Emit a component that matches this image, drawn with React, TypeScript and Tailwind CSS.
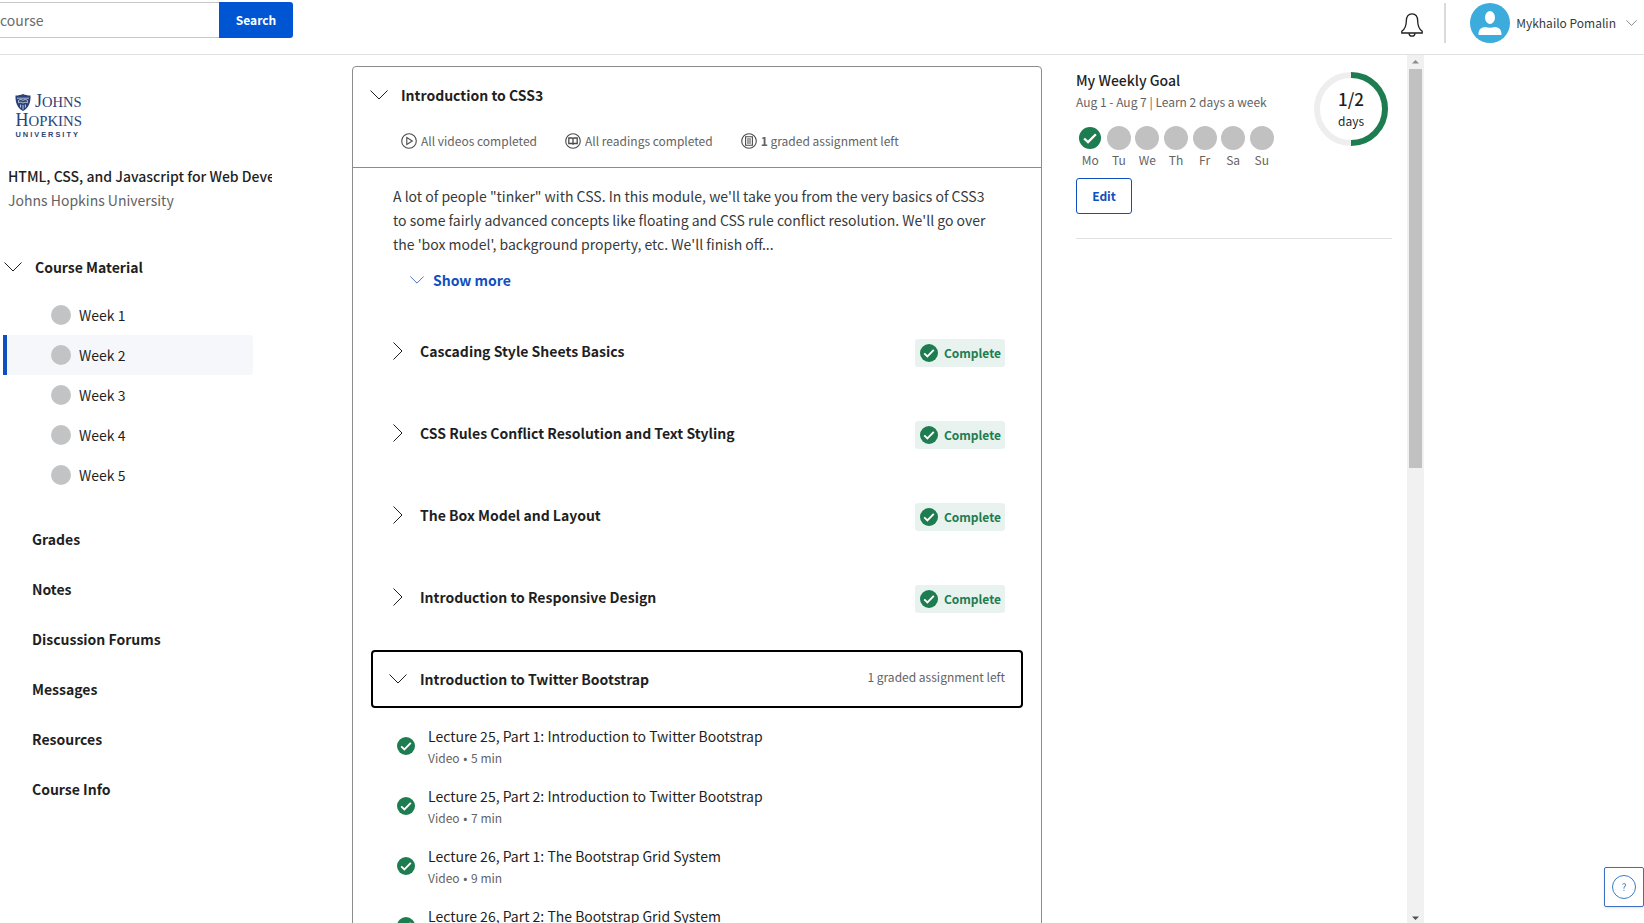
import React from "react";

const weeks = ["Week 1", "Week 2", "Week 3", "Week 4", "Week 5"];
const links = ["Grades", "Notes", "Discussion Forums", "Messages", "Resources", "Course Info"];
const lessons = [
  "Cascading Style Sheets Basics",
  "CSS Rules Conflict Resolution and Text Styling",
  "The Box Model and Layout",
  "Introduction to Responsive Design",
];
const lectures = [
  { title: "Lecture 25, Part 1: Introduction to Twitter Bootstrap", length: "5 min" },
  { title: "Lecture 25, Part 2: Introduction to Twitter Bootstrap", length: "7 min" },
  { title: "Lecture 26, Part 1: The Bootstrap Grid System", length: "9 min" },
  { title: "Lecture 26, Part 2: The Bootstrap Grid System", length: "8 min" },
];
const days = ["Mo", "Tu", "We", "Th", "Fr", "Sa", "Su"];

function ChevronDown({ className }: { className: string }) {
  return (
    <svg viewBox="0 0 18 10" className={className} fill="none" stroke="currentColor" strokeWidth="1" aria-hidden="true">
      <path d="M0.5 0.5 9 9 17.5 0.5" />
    </svg>
  );
}

function ChevronRight() {
  return (
    <svg viewBox="0 0 10 18" className="h-[18px] w-[10px]" fill="none" stroke="currentColor" strokeWidth="1" aria-hidden="true">
      <path d="M0.5 0.5 9 9 0.5 17.5" />
    </svg>
  );
}

function Check({ className }: { className: string }) {
  return (
    <svg viewBox="0 0 18 18" className={className} aria-hidden="true">
      <circle cx="9" cy="9" r="9" fill="#1d7c50" />
      <path d="M4.2 9.4 7.4 12.4 13.8 5.9" fill="none" stroke="#fff" strokeWidth="1.9" />
    </svg>
  );
}

function Logo() {
  return (
    <svg viewBox="0 0 72 48" className="h-12 w-[72px] overflow-visible" role="img" aria-label="Johns Hopkins University" fill="#2b4278">
      <path d="M0.500 1.500C3 1.600 5.500 1 8 0c2.500 1 5 1.600 7.500 1.500C15.800 8 14 14 8 17 2 14 0.200 8 0.500 1.500Z" />
      <path d="M2 4.200h12M3.600 6.200c1.600-.9 3-.9 4.400.2 1.400-1.100 2.800-1.100 4.400-.2v2.600c-1.600-.8-3-.7-4.400.3-1.400-1-2.800-1.100-4.400-.3Z" fill="none" stroke="#c3cce0" strokeWidth="0.9" />
      <path d="M5.600 10.500v3M8 11v4.500M10.400 10.500v3" stroke="#c3cce0" strokeWidth="1" />
      <g fontFamily="Liberation Serif, serif">
        <text x="20" y="13" fontSize="18">J<tspan fontSize="14.500">OHNS</tspan></text>
        <text x="0.500" y="32" fontSize="18">H<tspan fontSize="14.800">OPKINS</tspan></text>
      </g>
      <text x="0.500" y="43" fontSize="7.400" className="tracking-[2px]" fontFamily="Liberation Sans, sans-serif" fontWeight="700">UNIVERSITY</text>
    </svg>
  );
}

function Header() {
  return (
    <header className="flex h-[55px] shrink-0 items-start justify-between border-b border-[#e1e1e1]">
      <form className="flex pt-[2px]" onSubmit={(e) => e.preventDefault()}>
        <input
          type="text"
          aria-label="Search course"
          placeholder="course"
          className="h-9 w-[219px] border-y border-[#c7c7c7] pb-px text-[14px] leading-5 outline-none placeholder:text-[#6b6b6b]"
        />
        <button type="submit" className="h-9 w-[74px] rounded-r-[3px] bg-[#0056d2] text-[12px] leading-5 font-bold text-white">
          Search
        </button>
      </form>
      <div className="flex items-center pt-[3px] pr-[7px]">
        <button type="button" aria-label="Notifications" className="mt-[3px] mr-[21px] text-[#1f1f1f]">
          <svg viewBox="0 0 22 24" className="h-6 w-[22px]" fill="none" stroke="currentColor" strokeWidth="1.300">
            <path d="M5.300 8C5.300 3.300 7.600 0.800 11 0.800S16.700 3.300 16.700 8c0 5.500 1.200 8 4.500 10.300V20H0.800v-1.700C4.100 16 5.300 13.500 5.300 8Z" />
            <path d="M8 20.200c.2 4 5.800 4 6 0" />
          </svg>
        </button>
        <div className="h-10 w-[2px] bg-[#dadada]" />
        <button type="button" className="ml-6 flex items-center text-[#373a3c]">
          <svg viewBox="0 0 40 40" className="size-10" aria-hidden="true">
            <circle cx="20" cy="20" r="20" fill="#3cacdc" />
            <ellipse cx="20" cy="14.500" rx="5" ry="6.500" fill="#fff" />
            <path d="M8.500 32c0-5 1.500-7.500 7-8 2.500 1 6.500 1 9 0 5.500.5 7 3 7 8Z" fill="#fff" />
          </svg>
          <span className="ml-[6px] text-[12px] leading-5">Mykhailo Pomalin</span>
          <ChevronDown className="ml-[10px] h-[6px] w-[11px]" />
        </button>
      </div>
    </header>
  );
}

function Sidebar() {
  return (
    <aside className="w-[352px] shrink-0">
      <div className="w-[272px] pt-[39px] pl-2">
        <div className="pl-[7px]">
          <Logo />
        </div>
        <h1 className="mt-[22px] overflow-hidden text-[14px] leading-6 font-medium whitespace-nowrap">
          HTML, CSS, and Javascript for Web Developers
        </h1>
        <p className="text-[14px] leading-6 text-[#636363]">Johns Hopkins University</p>
      </div>
      <nav className="mt-[43px]">
        <button type="button" className="flex items-center gap-[13px] pl-1 text-[14px] leading-6 font-bold">
          <ChevronDown className="h-[10px] w-[18px]" />
          Course Material
        </button>
        <ul className="mt-4 ml-[3px] w-[250px]">
          {weeks.map((week, i) => (
            <li key={week}>
              <a
                href="#"
                className={
                  "flex h-10 items-center gap-2 rounded-r-[3px] border-l-4 pl-11 text-[14px] leading-6 " +
                  (i === 1 ? "border-[#0f4fbf] bg-[#f5f7fa]" : "border-transparent")
                }
              >
                <span className="size-5 rounded-full bg-[#c1c3c5]" />
                {week}
              </a>
            </li>
          ))}
        </ul>
        <ul className="mt-[19px] pl-8">
          {links.map((link) => (
            <li key={link} className="flex h-[50px] items-center">
              <a href="#" className="text-[14px] leading-6 font-bold">{link}</a>
            </li>
          ))}
        </ul>
      </nav>
    </aside>
  );
}

function StatusIcon({ children }: { children: React.ReactNode }) {
  return (
    <svg viewBox="0 0 16 16" className="size-4" fill="none" stroke="#4a4a4a" strokeWidth="1.100" aria-hidden="true">
      <circle cx="8" cy="8" r="7.300" />
      {children}
    </svg>
  );
}

function ModuleHeader() {
  return (
    <div className="border-b border-[#8c8c8c] px-[17px] pt-4 pb-4">
      <button type="button" className="flex items-center gap-[13px] text-[14px] leading-6 font-bold">
        <ChevronDown className="h-[10px] w-[18px]" />
        Introduction to CSS3
      </button>
      <ul className="mt-6 ml-[31px] flex items-center gap-7 text-[12px] leading-5 text-[#636363]">
        <li className="flex items-center gap-1">
          <StatusIcon><path d="M5.800 4.500v7L11.300 8Z" /></StatusIcon>
          All videos completed
        </li>
        <li className="flex items-center gap-1">
          <StatusIcon>
            <path d="M3.800 5h3.200L8 5.600 9 5h3.200v5.500H9L8 11.200l-1-.7H3.800ZM8 5.600v5.600" strokeWidth="1.300" />
          </StatusIcon>
          All readings completed
        </li>
        <li className="flex items-center gap-1">
          <StatusIcon><path d="M4.600 3.700h6.800v8.600H4.600ZM6 6h4M6 8h4M6 10h4" /></StatusIcon>
          <span><b>1</b> graded assignment left</span>
        </li>
      </ul>
    </div>
  );
}

function ModuleCard() {
  return (
    <section className="min-w-0 flex-1 self-start rounded-[4px] border border-[#8c8c8c]">
      <ModuleHeader />
      <div className="px-[18px] pt-4">
        <p className="px-[22px] text-[14px] leading-6 text-[#373a3c]">
          A lot of people "tinker" with CSS. In this module, we'll take you from the very basics of CSS3 to some fairly
          advanced concepts like floating and CSS rule conflict resolution. We'll go over the 'box model', background
          property, etc. We'll finish off...
        </p>
        <button type="button" className="mt-3 ml-[39px] flex items-center gap-[9px] text-[14px] leading-6 font-bold text-[#0f4fbf]">
          <ChevronDown className="h-2 w-[14px]" />
          Show more
        </button>
        <div className="mt-[30px] flex flex-col gap-6">
          {lessons.map((lesson) => (
            <button key={lesson} type="button" className="flex h-[58px] items-center border-2 border-transparent px-4 text-left">
              <span className="flex w-[18px] justify-center"><ChevronRight /></span>
              <span className="ml-[13px] flex-1 text-[14px] leading-6 font-bold">{lesson}</span>
              <span className="mt-1 flex h-7 items-center gap-[6px] rounded-[3px] bg-[#e8f2ee] pr-1 pl-[5px] text-[12px] leading-5 font-bold text-[#1d7c50]">
                <Check className="size-[18px]" />
                Complete
              </span>
            </button>
          ))}
          <button type="button" className="flex h-[58px] items-center rounded-[4px] border-2 border-black px-4 text-left">
            <ChevronDown className="h-[10px] w-[18px]" />
            <span className="ml-[13px] flex-1 text-[14px] leading-6 font-bold">Introduction to Twitter Bootstrap</span>
            <span className="pb-1 text-[12px] leading-5 text-[#636363]">1 graded assignment left</span>
          </button>
        </div>
        <ul className="mt-2">
          {lectures.map((lecture) => (
            <li key={lecture.title}>
              <a href="#" className="flex h-[60px] items-center gap-[13px] pl-[26px]">
                <Check className="size-[18px]" />
                <span>
                  <span className="block text-[14px] leading-6">{lecture.title}</span>
                  <span className="block text-[12px] leading-5 text-[#636363]">
                    Video <span className="mx-px">•</span> {lecture.length}
                  </span>
                </span>
              </a>
            </li>
          ))}
        </ul>
      </div>
    </section>
  );
}

function WeeklyGoal() {
  return (
    <aside className="ml-[34px] w-[316px] shrink-0">
      <div className="flex justify-between border-b border-[#e1e1e1] pb-6">
        <div>
          <h2 className="mt-[2px] text-[14px] leading-6 font-medium">My Weekly Goal</h2>
          <p className="text-[12px] leading-5 text-[#636363]">Aug 1 - Aug 7 | Learn 2 days a week</p>
          <ul className="mt-[14px] grid w-[200px] grid-cols-7 justify-items-center text-[12px] leading-5 text-[#636363]">
            {days.map((day, i) => (
              <li key={day} className="flex flex-col items-center">
                {i === 0 ? (
                  <Check className="my-px size-[22px]" />
                ) : (
                  <span className="size-6 rounded-full bg-[#c1c1c1]" />
                )}
                {day}
              </li>
            ))}
          </ul>
          <button type="button" className="mt-2 h-9 w-14 rounded-[3px] border border-[#0f4fbf] text-[12px] leading-5 font-bold text-[#0f4fbf]">
            Edit
          </button>
        </div>
        <div className="mt-[6px] mr-1 grid size-[74px] place-items-center">
          <svg viewBox="0 0 74 74" className="col-start-1 row-start-1 size-[74px]" fill="none" strokeWidth="6" aria-hidden="true">
            <circle cx="37" cy="37" r="34" stroke="#eeeeee" />
            <path d="M37 3a34 34 0 0 1 0 68" stroke="#1d7c50" />
          </svg>
          <div className="col-start-1 row-start-1 text-center">
            <div className="text-[17px] leading-6 font-medium">1/2</div>
            <div className="text-[12px] leading-5">days</div>
          </div>
        </div>
      </div>
    </aside>
  );
}

function ScrollTrack() {
  return (
    <div className="ml-[15px] flex w-[17px] shrink-0 flex-col items-center bg-[#f1f1f1]" aria-hidden="true">
      <svg viewBox="0 0 17 14" className="h-[14px] w-[17px] shrink-0"><path d="M5 8.500 8.500 5 12 8.500Z" fill="#8b8b8b" /></svg>
      <div className="h-[46%] w-[13px] bg-[#c1c1c1]" />
      <svg viewBox="0 0 17 14" className="mt-auto h-[14px] w-[17px] shrink-0"><path d="M5 7.500 8.500 11 12 7.500Z" fill="#505050" /></svg>
    </div>
  );
}

export default function App() {
  return (
    <div className="flex h-screen flex-col overflow-hidden bg-white font-['Noto_Sans_CJK_JP',sans-serif] text-[#1f1f1f]">
      <Header />
      <div className="flex min-h-0 flex-1 pr-[220px]">
        <Sidebar />
        <main className="flex min-w-0 flex-1 overflow-hidden pt-[11px]">
          <ModuleCard />
          <WeeklyGoal />
        </main>
        <ScrollTrack />
      </div>
      <button
        type="button"
        aria-label="Help"
        className="fixed right-0 bottom-4 grid size-10 place-items-center rounded-[2px] border border-[#3b6fc0] bg-white text-[#3b7bc8] shadow-sm"
      >
        <span className="grid size-6 place-items-center rounded-full border border-[#3b7bc8] text-[10px] leading-none">?</span>
      </button>
    </div>
  );
}
